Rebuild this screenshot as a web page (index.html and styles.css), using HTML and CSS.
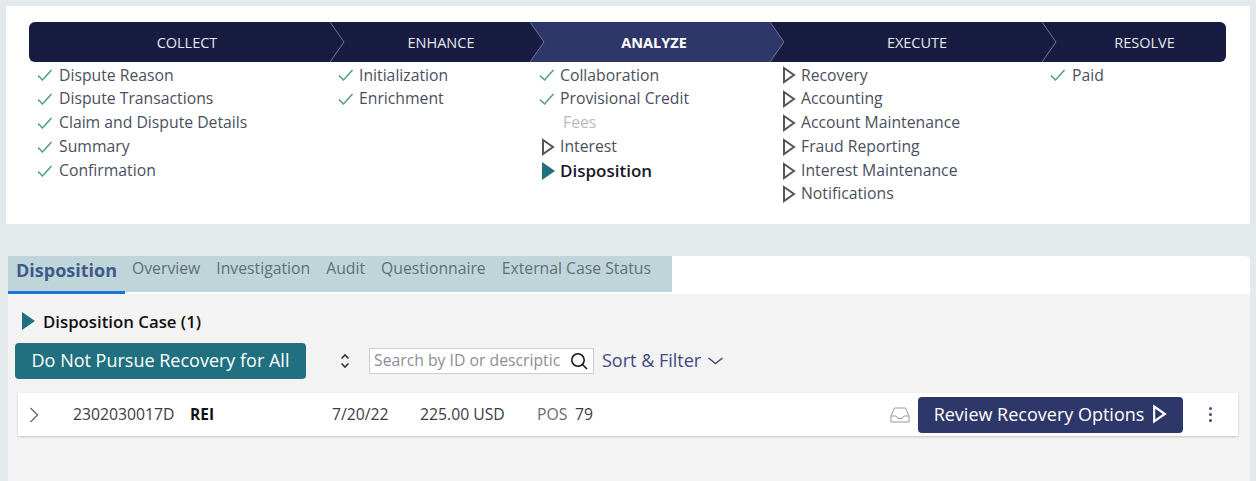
FILE: index.html
```html
<!DOCTYPE html>
<html lang="en">
<head>
<meta charset="utf-8">
<title>Disposition</title>
<link rel="stylesheet" href="styles.css">
</head>
<body>
<svg class="defs" width="0" height="0" aria-hidden="true">
  <symbol id="check" viewBox="0 0 16 14"><path d="M1 7.5 L5.5 12 L14.5 2" fill="none" stroke="#4f9d80" stroke-width="1.5"/></symbol>
  <symbol id="play" viewBox="0 0 14 18"><path d="M2 2 L12 9 L2 16 Z" fill="none" stroke="#55555f" stroke-width="2"/></symbol>
  <symbol id="playfill" viewBox="0 0 14 18"><path d="M1 0 L14 9 L1 18 Z" fill="#21707f"/></symbol>
</svg>
<main class="page">
  <section class="stages">
    <div class="bar">
      <div class="seg seg-collect"><span>COLLECT</span><svg class="sep" viewBox="0 0 16 40"><path d="M1 0 L15 20 L1 40" fill="none" stroke="#72758c" stroke-width="1"/></svg></div>
      <div class="seg seg-enhance"><span>ENHANCE</span></div>
      <div class="seg seg-analyze"><svg class="active" viewBox="0 0 254 40"><path d="M0 0 H240 L254 20 L240 40 H0 L14 20 Z" fill="#2e3769"/><path d="M0 0 L14 20 L0 40 M240 0 L254 20 L240 40" fill="none" stroke="#72758c"/></svg><span>ANALYZE</span></div>
      <div class="seg seg-execute"><span>EXECUTE</span><svg class="sep sep-exec" viewBox="0 0 16 40"><path d="M1 0 L15 20 L1 40" fill="none" stroke="#72758c" stroke-width="1"/></svg></div>
      <div class="seg seg-resolve"><span>RESOLVE</span></div>
    </div>
    <div class="cols">
      <ul class="col c1">
        <li><svg class="ico"><use href="#check"/></svg>Dispute Reason</li>
        <li><svg class="ico"><use href="#check"/></svg>Dispute Transactions</li>
        <li><svg class="ico"><use href="#check"/></svg>Claim and Dispute Details</li>
        <li><svg class="ico"><use href="#check"/></svg>Summary</li>
        <li><svg class="ico"><use href="#check"/></svg>Confirmation</li>
      </ul>
      <ul class="col c2">
        <li><svg class="ico"><use href="#check"/></svg>Initialization</li>
        <li><svg class="ico"><use href="#check"/></svg>Enrichment</li>
      </ul>
      <ul class="col c3">
        <li><svg class="ico"><use href="#check"/></svg>Collaboration</li>
        <li><svg class="ico"><use href="#check"/></svg>Provisional Credit</li>
        <li class="muted"><span class="ico"></span>Fees</li>
        <li><svg class="ico ico-play"><use href="#play"/></svg>Interest</li>
        <li class="current"><svg class="ico ico-play"><use href="#playfill"/></svg>Disposition</li>
      </ul>
      <ul class="col c4">
        <li><svg class="ico ico-play"><use href="#play"/></svg>Recovery</li>
        <li><svg class="ico ico-play"><use href="#play"/></svg>Accounting</li>
        <li><svg class="ico ico-play"><use href="#play"/></svg>Account Maintenance</li>
        <li><svg class="ico ico-play"><use href="#play"/></svg>Fraud Reporting</li>
        <li><svg class="ico ico-play"><use href="#play"/></svg>Interest Maintenance</li>
        <li><svg class="ico ico-play"><use href="#play"/></svg>Notifications</li>
      </ul>
      <ul class="col c5">
        <li><svg class="ico"><use href="#check"/></svg>Paid</li>
      </ul>
    </div>
  </section>
  <section class="work">
    <nav class="tabs">
      <div class="strip">
        <a class="tab tab-on">Disposition</a>
        <a class="tab">Overview</a>
        <a class="tab">Investigation</a>
        <a class="tab">Audit</a>
        <a class="tab">Questionnaire</a>
        <a class="tab">External Case Status</a>
      </div>
    </nav>
    <div class="body">
      <h2 class="case"><svg class="case-ico" viewBox="0 0 14 18"><use href="#playfill"/></svg>Disposition Case (1)</h2>
      <div class="tools">
        <button class="btn-teal">Do Not Pursue Recovery for All</button>
        <svg class="updown" viewBox="0 0 10 16"><path d="M1.5 5.5 L5 2 L8.5 5.5 M1.5 10.5 L5 14 L8.5 10.5" fill="none" stroke="#333" stroke-width="1.6"/></svg>
        <div class="search"><span class="ph">Search by ID or descriptic</span>
          <svg class="mag" viewBox="0 0 18 18"><circle cx="8" cy="8" r="6.2" fill="none" stroke="#111" stroke-width="1.5"/><path d="M12.5 12.5 L17 17" stroke="#111" stroke-width="1.5"/></svg>
        </div>
        <a class="sort">Sort &amp; Filter<svg class="down" viewBox="0 0 16 8"><path d="M1 1 L8 6.5 L15 1" fill="none" stroke="#3f4a80" stroke-width="1.5"/></svg></a>
      </div>
      <div class="row">
        <svg class="expand" viewBox="0 0 10 16"><path d="M1.5 1 L8.5 8 L1.5 15" fill="none" stroke="#6a6a6a" stroke-width="1.4"/></svg>
        <span class="r-id">2302030017D</span>
        <b class="r-code">REI</b>
        <span class="r-date">7/20/22</span>
        <span class="r-amt">225.00 USD</span>
        <span class="r-pos">POS</span>
        <span class="r-num">79</span>
        <svg class="inbox" viewBox="0 0 20 16"><path d="M1 9 L4.5 1 H15.5 L19 9 V15 H1 Z M1 9 H6 L8 11.5 H12 L14 9 H19" fill="none" stroke="#9a9a9a" stroke-width="1"/></svg>
        <button class="btn-navy">Review Recovery Options<svg class="btn-play" viewBox="0 0 14 18"><path d="M2 2 L12 9 L2 16 Z" fill="none" stroke="#fff" stroke-width="2"/></svg></button>
        <span class="dots"><i></i><i></i><i></i></span>
      </div>
    </div>
  </section>
</main>
</body>
</html>
```
FILE: styles.css
```css
* { box-sizing: border-box; }
html, body { margin: 0; height: 100%; }
body {
  background: #e4eaec;
  font-family: "Open Sans", "Liberation Sans", sans-serif;
  font-size: 15.75px;
  color: #4a5060;
  overflow: hidden;
}
.defs { position: absolute; }
.page { padding: 6px 6px 0; height: 481px; display: flex; flex-direction: column; }
.stages { background: #fff; height: 218px; padding: 16px 24px 0 23px; flex: none; }
.bar {
  display: flex; height: 40px; background: #181c40; border-radius: 6px;
  color: #e6e8ee; font-size: 14.5px; font-weight: 500;
}
.seg { position: relative; display: flex; align-items: center; justify-content: center; }
.seg span { position: relative; }
.seg-collect { width: 316px; }
.seg-enhance { width: 192px; }
.seg-analyze { width: 234px; color: #fff; font-weight: 700; }
.seg-execute { width: 292px; }
.seg-resolve { width: 163px; }
.sep { position: absolute; top: 0; left: 300px; width: 16px; height: 40px; }
.sep-exec { left: 270px; }
.active { position: absolute; top: 0; left: -7px; width: 254px; height: 40px; }
.cols { display: flex; padding-left: 8px; }
.col { list-style: none; margin: 0; padding: 1.6px 0 0; }
.col li { height: 23.5px; line-height: 23.5px; display: flex; align-items: center; white-space: nowrap; }
.col li:nth-child(3) { height: 24.5px; }
.col li:nth-child(4) { height: 23.75px; }
.c1 { width: 301px; }
.c2 { width: 201px; }
.c3 { width: 241px; }
.c4 { width: 270px; }
.ico { width: 16px; height: 14px; margin-right: 5px; flex: none; }
.c1 .ico, .c5 .ico { margin-right: 6px; }
.ico-play { width: 14px; height: 18px; margin-left: 2px; margin-right: 5px; }
.muted { color: #b9bbbf; }
.muted .ico { margin-right: 8px; }
.current { color: #16182a; font-weight: 600; font-size: 17px; }
.work { margin: 32px 0 0 2px; width: 1242px; flex: 1; display: flex; flex-direction: column; background: #f3f3f3; }
.tabs { background: #fff; height: 38px; flex: none; border-radius: 6px 6px 0 0; }
.strip {
  display: inline-flex; align-items: flex-start; height: 36px; width: 664px;
  background: #c0d5da; color: #5e7076;
}
.tab { padding: 2px 8px 0; line-height: 20px; white-space: nowrap; }
.tab-on {
  width: 117px; height: 38px; padding: 2px 0 0 8px; margin-right: -1px;
  color: #3d5a8a; font-size: 18px; font-weight: 700; line-height: 24px;
  border-bottom: 3px solid #1a73d6;
}
.body { padding: 16px 12px 0 7px; }
.case {
  margin: 0 0 11px 6px; display: flex; align-items: center; height: 22px;
  font-size: 16.8px; font-weight: 600; color: #111;
}
.case-ico { width: 14px; height: 18px; margin-right: 8px; }
.tools { display: flex; align-items: center; height: 36px; }
.btn-teal {
  width: 291px; height: 36px; background: #21707f; color: #fff; border: 0; border-radius: 4px;
  font: 400 18px/34px "Open Sans", sans-serif; padding: 0 0 2px;
}
.updown { width: 10px; height: 16px; margin-left: 34px; }
.search {
  width: 225px; height: 26px; margin-left: 19px; background: #fff; border: 1px solid #c9ced6;
  display: flex; align-items: center; justify-content: space-between; padding: 0 5px 3px 4px;
}
.mag { margin-top: 2px; }
.ph { color: #8d8d96; white-space: nowrap; overflow: hidden; width: 187px; }
.mag { width: 18px; height: 18px; flex: none; }
.sort { margin-left: 8px; font-size: 18px; color: #3f4a80; display: flex; align-items: center; white-space: nowrap; padding-bottom: 2px; }
.down { width: 17px; height: 8px; margin-left: 6px; margin-top: 2px; }
.row {
  margin: 14px 0 0 3px; width: 1220px; height: 43px; background: #fff;
  box-shadow: 0 1px 2px rgba(0,0,0,.2); display: flex; align-items: center; color: #3c3c44;
}
.row span, .row b { padding-bottom: 1px; }
.expand { width: 10px; height: 16px; margin-left: 11px; flex: none; }
.r-id { margin-left: 34px; width: 117px; }
.r-code { width: 142px; color: #111; font-weight: 700; font-size: 15.5px; }
.r-date { width: 88px; }
.r-amt { width: 117px; }
.r-pos { width: 38px; color: #6b6b73; }
.r-num { width: 315px; }
.inbox { width: 20px; height: 16px; flex: none; }
.btn-navy {
  width: 265px; height: 36px; margin-left: 8px; background: #2e3769; color: #fff; border: 0; border-radius: 4px;
  font: 400 18px "Open Sans", sans-serif; display: flex; align-items: center; justify-content: center; padding: 0 0 2px; flex: none;
}
.btn-play { width: 15px; height: 20px; margin-left: 8px; }
.dots { display: flex; flex-direction: column; gap: 3px; margin-left: 26px; }
.dots i { width: 3px; height: 3px; border-radius: 50%; background: #3f4a80; display: block; }
```
